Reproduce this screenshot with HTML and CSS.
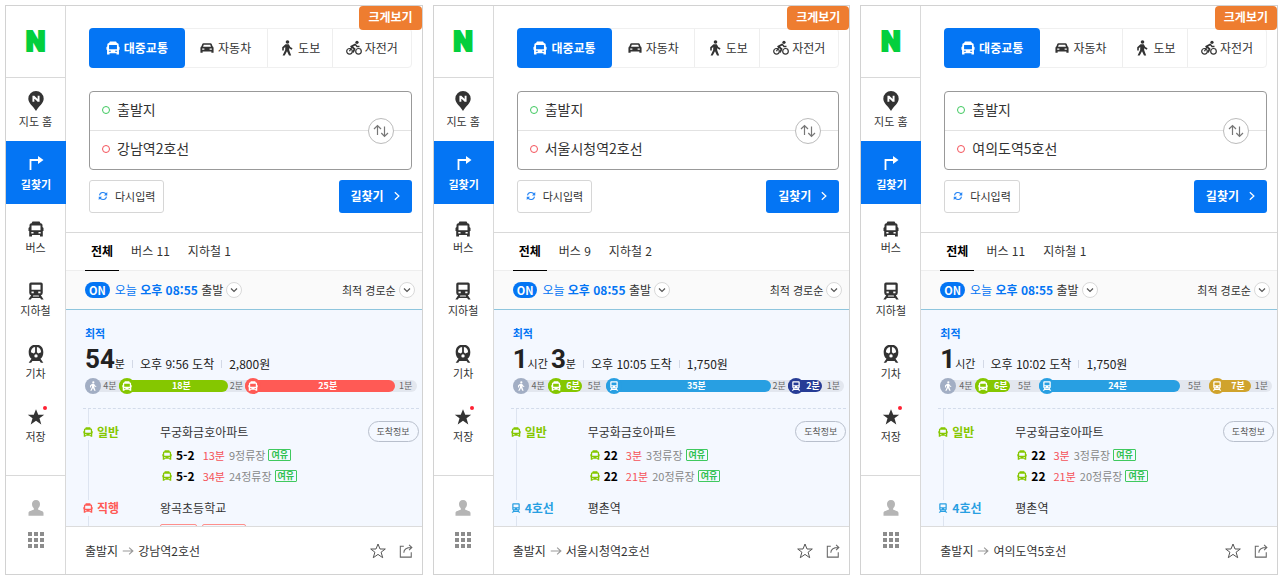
FILE: index.html
```html
<!DOCTYPE html>
<html lang="ko">
<head>
<meta charset="utf-8">
<meta name="viewport" content="width=device-width, initial-scale=1">
<title>길찾기</title>
<link rel="stylesheet" href="styles.css">
</head>
<body>
<svg class="sprite" aria-hidden="true">
  <symbol id="bus" viewBox="0 0 16 16"><path fill="currentColor" fill-rule="evenodd" d="M4.500 .5H11.500L12.500 2.200Q14.500 2.200 14.500 4V6L15.500 7V10H14.800V15.500H12V14H4V15.500H1.200V10H.5V7L1.500 6V4Q1.500 2.200 3.500 2.200ZM3.500 4.500V9.300H12.500V4.500ZM3.300 11V12.400H5.500V11ZM10.500 11V12.400H12.700V11Z"/></symbol>
  <symbol id="subway" viewBox="0 0 16 16"><path fill="currentColor" fill-rule="evenodd" d="M3.500 .5H12.500Q14 .5 14 2V9.500Q14 11.300 12.300 11.800L14.800 15.500H12.600L11.700 14.200H4.300L3.400 15.500H1.200L3.700 11.800Q2 11.300 2 9.500V2Q2 .5 3.500 .5ZM4 2.500V6.800H12V2.500ZM4 8.500V10H6V8.500ZM10 8.500V10H12V8.500ZM5.600 12L5.200 12.800H10.800L10.400 12Z"/></symbol>
  <symbol id="train" viewBox="0 0 16 16"><path fill="currentColor" fill-rule="evenodd" d="M5.500 0H10.500C13.500 1 14.500 3.500 14.500 6.500C14.500 9.500 13.500 11.300 12 12.200L14.500 15.800H12.300L11.200 14.200H4.800L3.700 15.800H1.500L4 12.200C2.500 11.300 1.500 9.500 1.500 6.500C1.500 3.500 2.500 1 5.500 0ZM7.200 1.800C4.800 2.200 3.500 4 3.500 6.500L6 7.500L7.200 6.500ZM8.800 1.800V6.500L10 7.500L12.500 6.500C12.500 4 11.200 2.200 8.800 1.800ZM8 8.200A1.500 1.500 0 1 0 8 11.200A1.500 1.500 0 1 0 8 8.200Z"/></symbol>
  <symbol id="car" viewBox="0 0 16 16"><path fill="currentColor" fill-rule="evenodd" d="M4 2.500H12Q13 2.500 13.400 3.500L14.300 6Q15.500 6.500 15.500 8V13.500H13V12H3V13.500H.5V8Q.5 6.500 1.700 6L2.600 3.500Q3 2.500 4 2.500ZM4.300 4.200L3.500 6.500H12.500L11.700 4.200ZM2.500 8.500V10H5V8.500ZM11 8.500V10H13.500V8.500Z"/></symbol>
  <symbol id="walk" viewBox="0 0 16 16"><circle cx="8.500" cy="2" r="1.800" fill="currentColor"/><path fill="currentColor" d="M6.500 4.300H9.800L11.300 7L13.500 8.300L12.800 9.700L10 8.300L10.300 10.500L12.200 15.500H10L8 11.200L5.700 15.500H3.600L6.200 10V7L4.800 8.200V10.500H3.200V7.200Z"/></symbol>
  <symbol id="bike" viewBox="0 0 16 16"><g fill="none" stroke="currentColor"><circle cx="3.500" cy="11.300" r="2.800" stroke-width="1.200"/><circle cx="12.500" cy="11.300" r="2.800" stroke-width="1.200"/><path stroke-width="1.800" d="M9.500 4.200L5.500 6.500L8.500 9L7 12.500"/><path stroke-width="1.300" d="M9 4L11 6.500H13.500M3.500 11.300L5.800 7"/></g><circle cx="11" cy="2.300" r="1.600" fill="currentColor"/></symbol>
  <symbol id="turn" viewBox="0 0 16 16"><path fill="none" stroke="currentColor" stroke-width="1.800" d="M2.500 15V5H11"/><path fill="currentColor" d="M10 1L15.500 5L10 9Z"/></symbol>
  <symbol id="pin" viewBox="0 0 16 20"><path fill="currentColor" d="M8 0A7.700 7.700 0 0 1 15.700 7.700C15.700 12 11 15 8 20C5 15 .3 12 .3 7.700A7.700 7.700 0 0 1 8 0Z"/><path fill="none" stroke="#fff" stroke-width="1.900" d="M5.400 10.700V4.800M5.400 5.200L10.600 10.200M10.600 4.800V10.700"/></symbol>
  <symbol id="star" viewBox="0 0 16 16"><path d="M8 1L10 6H15.300L11.100 9.200L12.700 14.700L8 11.400L3.300 14.700L4.900 9.200L.7 6H6Z"/></symbol>
  <symbol id="user" viewBox="0 0 16 16"><path fill="currentColor" d="M8 0C10.700 0 12 1.800 12 4C12 6.300 11 7.500 10.200 8.300V9.800C12.500 10.700 15.500 11 15.500 13V15.800H.5V13C.5 11 3.500 10.700 5.800 9.800V8.300C5 7.500 4 6.300 4 4C4 1.800 5.300 0 8 0Z"/></symbol>
  <symbol id="apps" viewBox="0 0 16 16"><path fill="currentColor" d="M0 0H4V4H0ZM6 0H10V4H6ZM12 0H16V4H12ZM0 6H4V10H0ZM6 6H10V10H6ZM12 6H16V10H12ZM0 12H4V16H0ZM6 12H10V16H6ZM12 12H16V16H12Z"/></symbol>
  <symbol id="swap" viewBox="0 0 16 16"><path fill="none" stroke="currentColor" stroke-width="1.200" d="M4.500 12V2.500M1 6L4.500 2.500L8 6M11.500 3.500V13.500M8.300 10L11.500 13.500L15 10"/></symbol>
  <symbol id="refresh" viewBox="0 0 16 16"><path fill="none" stroke="currentColor" stroke-width="1.700" d="M2.500 7C3 1.500 11 1 13 5.500M13.500 9C13 14.500 5 15 3 10.500"/><path fill="currentColor" d="M14.800 1.500V7H9.500ZM1.200 14.500V9H6.500Z"/></symbol>
  <symbol id="right" viewBox="0 0 16 16"><path fill="none" stroke="currentColor" stroke-width="2" d="M4.500 2L11 8L4.500 14"/></symbol>
  <symbol id="down" viewBox="0 0 16 16"><path fill="none" stroke="currentColor" stroke-width="2.400" d="M2 5L8 11L14 5"/></symbol>
  <symbol id="arrow" viewBox="0 0 16 16"><path fill="none" stroke="currentColor" stroke-width="1.500" d="M1 8H14.500M9.500 3.500L14.500 8L9.500 12.500"/></symbol>
  <symbol id="share" viewBox="0 0 16 16"><path fill="none" stroke="currentColor" stroke-width="1.200" d="M5.500 2.500H1.500V15H14V9.500M5.500 10C5.500 6 8 4 14.500 4M11.500 1L14.700 4L11.500 7"/></symbol>
</svg>

<div class="board">
  <article class="panel">
    <nav class="side">
      <a class="logo" href="#">N</a>
      <a class="side-item" href="#"><svg class="i-pin"><use href="#pin"/></svg>지도 홈</a>
      <a class="side-item on" href="#"><svg class="i16"><use href="#turn"/></svg>길찾기</a>
      <a class="side-item" href="#"><svg class="i16"><use href="#bus"/></svg>버스</a>
      <a class="side-item" href="#"><svg class="i18"><use href="#subway"/></svg>지하철</a>
      <a class="side-item" href="#"><svg class="i18"><use href="#train"/></svg>기차</a>
      <a class="side-item" href="#"><span class="dotted"><svg class="i18 solid"><use href="#star"/></svg></span>저장</a>
      <div class="side-foot">
        <button class="bare user" aria-label="내 정보"><svg class="i16"><use href="#user"/></svg></button>
        <button class="bare apps" aria-label="전체 서비스"><svg class="i16"><use href="#apps"/></svg></button>
      </div>
    </nav>
    <main class="main">
      <button class="enlarge">크게보기</button>
      <section class="search">
        <div class="modes">
          <button class="mode on"><svg class="i14"><use href="#bus"/></svg>대중교통</button>
          <button class="mode m-car"><svg class="i14"><use href="#car"/></svg>자동차</button>
          <button class="mode m-walk"><svg class="i16"><use href="#walk"/></svg>도보</button>
          <button class="mode m-bike"><svg class="i16"><use href="#bike"/></svg>자전거</button>
        </div>
        <div class="fields">
          <label class="field"><span class="ring start"></span><input type="text" aria-label="출발지" value="출발지"></label>
          <label class="field"><span class="ring goal"></span><input type="text" aria-label="도착지" value="강남역2호선"></label>
          <button class="swap" aria-label="출발지와 도착지 바꾸기"><svg class="i16"><use href="#swap"/></svg></button>
        </div>
        <div class="actions">
          <button class="reset"><svg class="i10"><use href="#refresh"/></svg>다시입력</button>
          <button class="find">길찾기<svg class="i10"><use href="#right"/></svg></button>
        </div>
      </section>
      <div class="tabs"><button class="tab on">전체</button><button class="tab">버스 11</button><button class="tab">지하철 1</button></div>
      <div class="filter">
        <span class="badge-on">ON</span>
        <button class="bare when"><span class="blue">오늘 <b>오후 08:55</b></span> 출발<span class="chev"><svg class="i8"><use href="#down"/></svg></span></button>
        <button class="bare sort">최적 경로순<span class="chev"><svg class="i8"><use href="#down"/></svg></span></button>
      </div>
      <section class="result">
        <div class="best">최적</div>
        <div class="summary"><span class="time"><strong>54</strong>분</span><span class="fact">오후 9:56 도착</span><span class="fact">2,800원</span></div>
        <div class="bar">
          <span class="seg" style="flex-grow:34"><i class="knob walker"><svg class="i10"><use href="#walk"/></svg></i><span>4분</span></span>
          <span class="seg ride green" style="flex-grow:109"><i class="knob"><svg class="i10"><use href="#bus"/></svg></i><span>18분</span></span>
          <span class="seg" style="flex-grow:17"><span>2분</span></span>
          <span class="seg ride red" style="flex-grow:150"><i class="knob"><svg class="i10"><use href="#bus"/></svg></i><span>25분</span></span>
          <span class="seg" style="flex-grow:22"><span>1분</span></span>
        </div>
        <div class="legs">
          <div class="leg">
            <span class="kind c-green"><svg class="i10"><use href="#bus"/></svg>일반</span>
            <span class="stop">무궁화금호아파트</span><button class="info">도착정보</button>
            <ul class="buses">
              <li><svg class="i10"><use href="#bus"/></svg><b>5-2</b><em>13분</em><span>9정류장</span><small>여유</small></li>
              <li><svg class="i10"><use href="#bus"/></svg><b>5-2</b><em>34분</em><span>24정류장</span><small>여유</small></li>
            </ul>
          </div>
          <div class="leg">
            <span class="kind c-red"><svg class="i10"><use href="#bus"/></svg>직행</span>
            <span class="stop">왕곡초등학교</span>
            <div class="lines"><span class="line-a"></span><span class="line-b"></span></div>
          </div>
        </div>
      </section>
      <footer class="foot">
        <span>출발지</span><svg class="i12 to"><use href="#arrow"/></svg><span>강남역2호선</span>
        <button class="bare fav" aria-label="즐겨찾기"><svg class="i16 outline"><use href="#star"/></svg></button>
        <button class="bare" aria-label="공유"><svg class="i14"><use href="#share"/></svg></button>
      </footer>
    </main>
  </article>

  <article class="panel">
    <nav class="side">
      <a class="logo" href="#">N</a>
      <a class="side-item" href="#"><svg class="i-pin"><use href="#pin"/></svg>지도 홈</a>
      <a class="side-item on" href="#"><svg class="i16"><use href="#turn"/></svg>길찾기</a>
      <a class="side-item" href="#"><svg class="i16"><use href="#bus"/></svg>버스</a>
      <a class="side-item" href="#"><svg class="i18"><use href="#subway"/></svg>지하철</a>
      <a class="side-item" href="#"><svg class="i18"><use href="#train"/></svg>기차</a>
      <a class="side-item" href="#"><span class="dotted"><svg class="i18 solid"><use href="#star"/></svg></span>저장</a>
      <div class="side-foot">
        <button class="bare user" aria-label="내 정보"><svg class="i16"><use href="#user"/></svg></button>
        <button class="bare apps" aria-label="전체 서비스"><svg class="i16"><use href="#apps"/></svg></button>
      </div>
    </nav>
    <main class="main">
      <button class="enlarge">크게보기</button>
      <section class="search">
        <div class="modes">
          <button class="mode on"><svg class="i14"><use href="#bus"/></svg>대중교통</button>
          <button class="mode m-car"><svg class="i14"><use href="#car"/></svg>자동차</button>
          <button class="mode m-walk"><svg class="i16"><use href="#walk"/></svg>도보</button>
          <button class="mode m-bike"><svg class="i16"><use href="#bike"/></svg>자전거</button>
        </div>
        <div class="fields">
          <label class="field"><span class="ring start"></span><input type="text" aria-label="출발지" value="출발지"></label>
          <label class="field"><span class="ring goal"></span><input type="text" aria-label="도착지" value="서울시청역2호선"></label>
          <button class="swap" aria-label="출발지와 도착지 바꾸기"><svg class="i16"><use href="#swap"/></svg></button>
        </div>
        <div class="actions">
          <button class="reset"><svg class="i10"><use href="#refresh"/></svg>다시입력</button>
          <button class="find">길찾기<svg class="i10"><use href="#right"/></svg></button>
        </div>
      </section>
      <div class="tabs"><button class="tab on">전체</button><button class="tab">버스 9</button><button class="tab">지하철 2</button></div>
      <div class="filter">
        <span class="badge-on">ON</span>
        <button class="bare when"><span class="blue">오늘 <b>오후 08:55</b></span> 출발<span class="chev"><svg class="i8"><use href="#down"/></svg></span></button>
        <button class="bare sort">최적 경로순<span class="chev"><svg class="i8"><use href="#down"/></svg></span></button>
      </div>
      <section class="result">
        <div class="best">최적</div>
        <div class="summary"><span class="time"><strong>1</strong>시간 <strong>3</strong>분</span><span class="fact">오후 10:05 도착</span><span class="fact">1,750원</span></div>
        <div class="bar">
          <span class="seg" style="flex-grow:35"><i class="knob walker"><svg class="i10"><use href="#walk"/></svg></i><span>4분</span></span>
          <span class="seg ride green" style="flex-grow:35"><i class="knob"><svg class="i10"><use href="#bus"/></svg></i><span>6분</span></span>
          <span class="seg" style="flex-grow:24"><span>5분</span></span>
          <span class="seg ride sky" style="flex-grow:165"><i class="knob"><svg class="i10"><use href="#subway"/></svg></i><span>35분</span></span>
          <span class="seg" style="flex-grow:17"><span>2분</span></span>
          <span class="seg ride navy" style="flex-grow:35"><i class="knob"><svg class="i10"><use href="#subway"/></svg></i><span>2분</span></span>
          <span class="seg" style="flex-grow:22"><span>1분</span></span>
        </div>
        <div class="legs">
          <div class="leg">
            <span class="kind c-green"><svg class="i10"><use href="#bus"/></svg>일반</span>
            <span class="stop">무궁화금호아파트</span><button class="info">도착정보</button>
            <ul class="buses">
              <li><svg class="i10"><use href="#bus"/></svg><b>22</b><em>3분</em><span>3정류장</span><small>여유</small></li>
              <li><svg class="i10"><use href="#bus"/></svg><b>22</b><em>21분</em><span>20정류장</span><small>여유</small></li>
            </ul>
          </div>
          <div class="leg">
            <span class="kind c-sky"><svg class="i10"><use href="#subway"/></svg>4호선</span>
            <span class="stop">평촌역</span>
          </div>
        </div>
      </section>
      <footer class="foot">
        <span>출발지</span><svg class="i12 to"><use href="#arrow"/></svg><span>서울시청역2호선</span>
        <button class="bare fav" aria-label="즐겨찾기"><svg class="i16 outline"><use href="#star"/></svg></button>
        <button class="bare" aria-label="공유"><svg class="i14"><use href="#share"/></svg></button>
      </footer>
    </main>
  </article>

  <article class="panel">
    <nav class="side">
      <a class="logo" href="#">N</a>
      <a class="side-item" href="#"><svg class="i-pin"><use href="#pin"/></svg>지도 홈</a>
      <a class="side-item on" href="#"><svg class="i16"><use href="#turn"/></svg>길찾기</a>
      <a class="side-item" href="#"><svg class="i16"><use href="#bus"/></svg>버스</a>
      <a class="side-item" href="#"><svg class="i18"><use href="#subway"/></svg>지하철</a>
      <a class="side-item" href="#"><svg class="i18"><use href="#train"/></svg>기차</a>
      <a class="side-item" href="#"><span class="dotted"><svg class="i18 solid"><use href="#star"/></svg></span>저장</a>
      <div class="side-foot">
        <button class="bare user" aria-label="내 정보"><svg class="i16"><use href="#user"/></svg></button>
        <button class="bare apps" aria-label="전체 서비스"><svg class="i16"><use href="#apps"/></svg></button>
      </div>
    </nav>
    <main class="main">
      <button class="enlarge">크게보기</button>
      <section class="search">
        <div class="modes">
          <button class="mode on"><svg class="i14"><use href="#bus"/></svg>대중교통</button>
          <button class="mode m-car"><svg class="i14"><use href="#car"/></svg>자동차</button>
          <button class="mode m-walk"><svg class="i16"><use href="#walk"/></svg>도보</button>
          <button class="mode m-bike"><svg class="i16"><use href="#bike"/></svg>자전거</button>
        </div>
        <div class="fields">
          <label class="field"><span class="ring start"></span><input type="text" aria-label="출발지" value="출발지"></label>
          <label class="field"><span class="ring goal"></span><input type="text" aria-label="도착지" value="여의도역5호선"></label>
          <button class="swap" aria-label="출발지와 도착지 바꾸기"><svg class="i16"><use href="#swap"/></svg></button>
        </div>
        <div class="actions">
          <button class="reset"><svg class="i10"><use href="#refresh"/></svg>다시입력</button>
          <button class="find">길찾기<svg class="i10"><use href="#right"/></svg></button>
        </div>
      </section>
      <div class="tabs"><button class="tab on">전체</button><button class="tab">버스 11</button><button class="tab">지하철 1</button></div>
      <div class="filter">
        <span class="badge-on">ON</span>
        <button class="bare when"><span class="blue">오늘 <b>오후 08:55</b></span> 출발<span class="chev"><svg class="i8"><use href="#down"/></svg></span></button>
        <button class="bare sort">최적 경로순<span class="chev"><svg class="i8"><use href="#down"/></svg></span></button>
      </div>
      <section class="result">
        <div class="best">최적</div>
        <div class="summary"><span class="time"><strong>1</strong>시간</span><span class="fact">오후 10:02 도착</span><span class="fact">1,750원</span></div>
        <div class="bar">
          <span class="seg" style="flex-grow:35"><i class="knob walker"><svg class="i10"><use href="#walk"/></svg></i><span>4분</span></span>
          <span class="seg ride green" style="flex-grow:35"><i class="knob"><svg class="i10"><use href="#bus"/></svg></i><span>6분</span></span>
          <span class="seg" style="flex-grow:29"><span>5분</span></span>
          <span class="seg ride sky" style="flex-grow:141"><i class="knob"><svg class="i10"><use href="#subway"/></svg></i><span>24분</span></span>
          <span class="seg" style="flex-grow:29"><span>5분</span></span>
          <span class="seg ride gold" style="flex-grow:42"><i class="knob"><svg class="i10"><use href="#subway"/></svg></i><span>7분</span></span>
          <span class="seg" style="flex-grow:21"><span>1분</span></span>
        </div>
        <div class="legs">
          <div class="leg">
            <span class="kind c-green"><svg class="i10"><use href="#bus"/></svg>일반</span>
            <span class="stop">무궁화금호아파트</span><button class="info">도착정보</button>
            <ul class="buses">
              <li><svg class="i10"><use href="#bus"/></svg><b>22</b><em>3분</em><span>3정류장</span><small>여유</small></li>
              <li><svg class="i10"><use href="#bus"/></svg><b>22</b><em>21분</em><span>20정류장</span><small>여유</small></li>
            </ul>
          </div>
          <div class="leg">
            <span class="kind c-sky"><svg class="i10"><use href="#subway"/></svg>4호선</span>
            <span class="stop">평촌역</span>
          </div>
        </div>
      </section>
      <footer class="foot">
        <span>출발지</span><svg class="i12 to"><use href="#arrow"/></svg><span>여의도역5호선</span>
        <button class="bare fav" aria-label="즐겨찾기"><svg class="i16 outline"><use href="#star"/></svg></button>
        <button class="bare" aria-label="공유"><svg class="i14"><use href="#share"/></svg></button>
      </footer>
    </main>
  </article>
</div>
</body>
</html>
```

FILE: styles.css
```css
* { box-sizing: border-box; }
body {
  margin: 0;
  background: #fff;
  color: #333;
  font-family: "Noto Sans CJK KR", sans-serif;
  font-size: 12px;
  line-height: 16px;
}
button, input {
  margin: 0;
  padding: 0;
  border: 0;
  background: none;
  color: inherit;
  font: inherit;
}
button { white-space: nowrap; cursor: pointer; }
a { color: inherit; text-decoration: none; }
svg { display: block; flex: none; }
.sprite { position: absolute; width: 0; height: 0; }
.i8 { width: 8px; height: 8px; }
.i10 { width: 10px; height: 10px; }
.i12 { width: 12px; height: 12px; }
.i14 { width: 14px; height: 14px; }
.i16 { width: 16px; height: 16px; }
.i18 { width: 18px; height: 18px; }
.i-pin { width: 16px; height: 20px; }
.solid { fill: #333; }
.outline { fill: none; stroke: #555; }
.bare { display: flex; align-items: center; }

.board {
  display: grid;
  grid-template-columns: repeat(3, minmax(0, 1fr));
  grid-template-rows: minmax(0, 1fr);
  gap: 10px;
  height: 100vh;
  padding: 5px 2px 4px 5px;
}
.panel { display: flex; min-width: 0; border: 1px solid #d2d2d2; }

/* sidebar */
.side {
  display: flex;
  flex-direction: column;
  flex: none;
  width: 60px;
  border-right: 1px solid #d9d9d9;
}
.logo {
  display: flex;
  align-items: center;
  justify-content: center;
  height: 72px;
  border-bottom: 1px solid #d9d9d9;
  color: #03cf3d;
  font: 900 28px/30px Roboto, sans-serif;
  -webkit-text-stroke: 2px #03cf3d;
}
.side-item {
  display: flex;
  flex-direction: column;
  align-items: center;
  justify-content: flex-end;
  gap: 2px;
  height: 63px;
  padding-bottom: 12px;
  font-size: 11px;
}
.side-item.on { margin-right: -1px; background: #0475f4; color: #fff; font-weight: 700; gap: 5px; }
.dotted { position: relative; }
.dotted::after {
  content: "";
  position: absolute;
  top: -2px;
  right: -2px;
  width: 4px;
  height: 4px;
  border-radius: 50%;
  background: #f23;
}
.side-foot {
  display: flex;
  flex-direction: column;
  align-items: center;
  gap: 16px;
  flex: 1;
  margin-top: 19px;
  padding-top: 24px;
  border-top: 1px solid #d9d9d9;
}
.user { color: #b5b5b5; }
.apps { color: #8c8c8c; }

/* search form */
.main { position: relative; display: flex; flex-direction: column; flex: 1; min-width: 0; }
.enlarge {
  position: absolute;
  top: 0;
  right: 0;
  padding: 3px 9px 5px;
  border-radius: 4px;
  background: #ee7d30;
  color: #fff;
  font-weight: 700;
}
.search { padding: 22px 10px 19px 23px; border-bottom: 1px solid #d9d9d9; }
.modes { display: flex; height: 40px; border: 1px solid #f0f0f0; border-radius: 4px; }
.mode {
  display: flex;
  align-items: center;
  justify-content: center;
  flex: 83 1 0;
  gap: 4px;
  border-left: 1px solid #eee;
}
.mode.on {
  flex-grow: 97;
  margin: -1px 0 -1px -1px;
  border: 0;
  border-radius: 4px;
  background: #0475f4;
  color: #fff;
  font-weight: 700;
}
.m-car { border-left: 0; }
.m-walk { flex-grow: 65; gap: 3px; }
.m-bike { flex-grow: 79; gap: 3px; }
.fields {
  position: relative;
  margin-top: 23px;
  border: 1px solid #999;
  border-radius: 4px;
}
.field { display: flex; align-items: center; gap: 7px; height: 38px; padding: 0 0 2px 12px; }
.field + .field { height: 39px; border-top: 1px solid #e2e2e2; }
.field input { flex: 1; min-width: 0; padding: 0 48px 3px 0; outline: 0; font-size: 14px; line-height: 20px; }
.ring { width: 8px; height: 8px; border: 1px solid; border-radius: 50%; }
.start { color: #3fc95f; }
.goal { color: #f4525a; }
.swap {
  position: absolute;
  top: 26px;
  right: 17px;
  display: grid;
  place-items: center;
  width: 26px;
  height: 26px;
  border: 1px solid #bbb;
  border-radius: 50%;
  background: #fff;
  color: #777;
}
.actions { display: flex; justify-content: space-between; margin-top: 10px; }
.reset, .find { display: flex; align-items: center; height: 33px; border-radius: 3px; }
.reset { gap: 7px; padding: 0 8px 2px; border: 1px solid #d6d6d6; font-size: 11px; }
.reset svg { color: #2484f5; }
.find { gap: 8px; padding: 0 10px 2px 12px; background: #0475f4; color: #fff; font-weight: 700; }

/* result tabs and filter */
.tabs { display: flex; gap: 6px; height: 38px; padding-left: 19px; border-bottom: 1px solid #eee; }
.tab { padding: 0 6px 2px; }
.tab.on { margin-bottom: -1px; border-bottom: 1px solid #000; color: #000; font-weight: 700; }
.filter {
  display: flex;
  align-items: center;
  height: 39px;
  padding: 0 7px 0 19px;
  border-bottom: 1px solid #8ec5dd;
  background: #fafafa;
}
.badge-on {
  padding: 0 4px;
  border-radius: 8px;
  background: #0475f4;
  color: #fff;
  font-size: 11px;
  font-weight: 700;
}
.when { margin-left: 5px; white-space: pre; }
.blue { color: #0475f4; }
.blue b { font-weight: 700; }
.sort { margin-left: auto; font-size: 11px; }
.chev {
  display: grid;
  place-items: center;
  width: 16px;
  height: 16px;
  margin-left: 3px;
  border: 1px solid #d9d9d9;
  border-radius: 50%;
  background: #fff;
  color: #555;
}

/* route result */
.result { flex: 1; min-height: 0; overflow: hidden; padding: 15px 5px 0 19px; background: #f4f8ff; }
.best { color: #0475f4; font-size: 11px; font-weight: 700; }
.summary { display: flex; align-items: baseline; height: 28px; margin-top: 4px; color: #222; line-height: 28px; }
.time { font-size: 11px; }
.time strong { font: 700 26px/28px Roboto, sans-serif; }
.fact { display: flex; align-items: center; }
.fact::before { content: ""; width: 1px; height: 8px; margin: 0 7px; background: #d3d9e6; }
.bar {
  display: flex;
  align-items: center;
  height: 12px;
  margin-top: 7px;
  border-radius: 6px;
  background: #e3e7ef;
  color: #666;
  font-size: 9px;
  line-height: 12px;
}
.seg { display: flex; align-items: center; flex: 1 1 0; min-width: 0; height: 12px; white-space: nowrap; }
.seg > span { flex: 1; text-align: center; }
.ride { border-radius: 6px; color: #fff; font-weight: 700; }
.knob {
  display: grid;
  place-items: center;
  flex: none;
  width: 16px;
  height: 16px;
  border-radius: 50%;
  background: inherit;
  color: #fff;
}
.walker { background: #a2aec4; }
.green { background: #85c700; }
.red { background: #ff5a55; }
.sky { background: #289fe2; }
.navy { background: #263c96; }
.gold { background: #d0a32c; }
.legs { position: relative; margin: 16px -2px 0; border-top: 1px dashed #d3dceb; }
.legs::before {
  content: "";
  position: absolute;
  top: 0;
  left: 5px;
  height: 140px;
  border-left: 1px solid #dde4f0;
}
.leg {
  position: relative;
  display: grid;
  grid-template-columns: 77px 1fr auto;
  align-items: center;
  padding-top: 12px;
}
.leg + .leg { padding-top: 14px; }
.kind {
  display: flex;
  align-items: center;
  justify-self: start;
  gap: 4px;
  background: #f4f8ff;
  font-weight: 700;
}
.c-green { color: #85c700; }
.c-red { color: #ff5a55; }
.c-sky { color: #289fe2; }
.info {
  height: 21px;
  padding: 0 8px;
  border: 1px solid #b8bfcc;
  border-radius: 11px;
  color: #555;
  font-size: 9px;
}
.buses { grid-column: 2 / 4; margin: 2px 0 0; padding: 0 0 0 2px; list-style: none; }
.buses li { display: flex; align-items: center; height: 21px; }
.buses svg { color: #85c700; }
.buses b { margin: 0 8px 0 4px; color: #000; }
.buses em { margin-right: 4px; color: #f4525a; font-size: 11px; font-style: normal; }
.buses span { color: #888; font-size: 11px; }
.buses small {
  margin-left: 3px;
  padding: 0 2px;
  border: 1px solid #3fc95f;
  border-radius: 1px;
  color: #2fc050;
  font-size: 9px;
  font-weight: 700;
  line-height: 10px;
}
.lines { display: flex; grid-column: 2 / 4; gap: 5px; margin-top: 8px; }
.line-a, .line-b { width: 37px; height: 14px; border: 1px solid #ff8f8b; border-radius: 2px; }
.line-b { width: 44px; }

/* bottom bar */
.foot {
  display: flex;
  align-items: center;
  flex: none;
  height: 48px;
  padding: 0 9px 0 19px;
  border-top: 1px solid #dcdcdc;
  color: #333;
}
.to { margin: 0 4px; color: #999; }
.fav { margin: 0 13px 0 auto; }
.foot .bare { color: #666; }
```
